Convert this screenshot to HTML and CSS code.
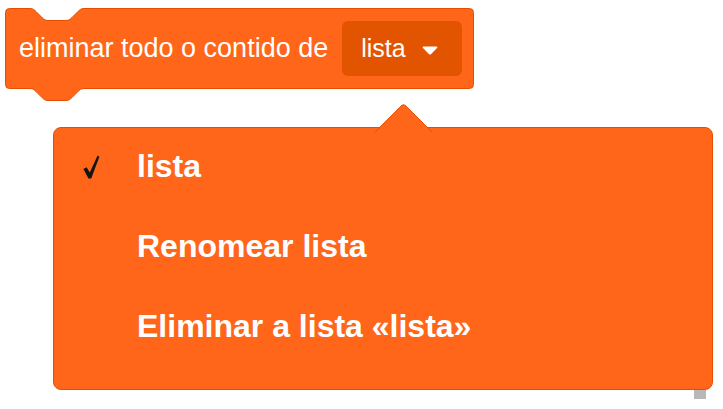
FILE: index.html
```html
<!DOCTYPE html>
<html lang="gl">
<head>
    <meta charset="UTF-8">
    <meta name="viewport" content="width=device-width, initial-scale=1.0">
    <title>eliminar todo o contido de lista</title>
    <link rel="stylesheet" href="styles.css">
</head>
<body>
    <!-- Block -->
    <div class="block">
        <svg class="block-shape" width="470" height="95" viewBox="0 0 470 95">
            <path d="M0.5 4.5 Q0.5 0.5 4.5 0.5 H25 c3,0 4.5,1.5 6,3 l6,6 c1.5,1.5 3,3 6,3 h18 c3,0 4.5,-1.5 6,-3 l6,-6 c1.5,-1.5 3,-3 6,-3 H464.5 Q468.5 0.5 468.5 4.5 V76.5 Q468.5 80.5 464.5 80.5 H79 c-3,0 -4.5,1.5 -6,3 l-6,6 c-1.5,1.5 -3,3 -6,3 h-18 c-3,0 -4.5,-1.5 -6,-3 l-6,-6 c-1.5,-1.5 -3,-3 -6,-3 H4.5 Q0.5 80.5 0.5 76.5 Z" fill="#ff661a" stroke="#e64d00" stroke-width="1"/>
        </svg>
        <div class="block-row">
            <span class="block-label">eliminar todo o contido de</span>
            <div class="field">
                <span>lista</span>
                <svg class="caret" width="16" height="9" viewBox="0 0 16 9">
                    <path d="M1.6 0.5 H14.4 Q16 0.5 15 1.9 L9.2 8 Q8 9.1 6.8 8 L1 1.9 Q0 0.5 1.6 0.5 Z" fill="#fff"/>
                </svg>
            </div>
        </div>
    </div>

    <!-- Dropdown menu -->
    <div class="menu-wrap">
        <div class="menu-arrow"></div>
        <div class="menu">
            <div class="menu-item">
                <svg class="check" width="17" height="24" viewBox="0 0 17 24">
                    <path d="M0.4 14 L3.6 12.2 L6.8 17.6 L14.6 0.6 L16.4 1.8 L8.2 23.4 L5.4 23.4 Z" fill="#151515"/>
                </svg>
                <span>lista</span>
            </div>
            <div class="menu-item">
                <span class="check"></span>
                <span>Renomear lista</span>
            </div>
            <div class="menu-item">
                <span class="check"></span>
                <span>Eliminar a lista «lista»</span>
            </div>
        </div>
    </div>
    <div class="corner"></div>
</body>
</html>
```

FILE: styles.css
```css
body {
    margin: 0;
    background: #fff;
    font-family: "Liberation Sans", Arial, sans-serif;
    width: 723px;
    height: 409px;
    overflow: hidden;
}
.block {
    display: grid;
    width: 470px;
    height: 95px;
    margin: 8px 0 0 5px;
}
.block-shape,
.block-row {
    grid-area: 1 / 1;
}
.block-row {
    display: flex;
    align-items: center;
    height: 81px;
    padding-left: 14px;
    color: #fff;
    font-size: 27px;
}
.field {
    display: flex;
    align-items: center;
    width: 120px;
    height: 55px;
    box-sizing: border-box;
    margin-left: 14px;
    padding-left: 19px;
    background: #e35400;
    border-radius: 6px;
    font-size: 25px;
}
.caret {
    margin-left: 16px;
    margin-top: 3px;
}
.menu-wrap {
    width: 660px;
    margin-left: 53px;
}
.menu-arrow {
    height: 24px;
}
.menu-arrow::before {
    content: '';
    display: block;
    width: 40px;
    height: 40px;
    margin-left: 330px;
    background: #ff661a;
    border-top: 1px solid #e64d00;
    border-left: 1px solid #e64d00;
    border-top-left-radius: 5px;
    transform: translateY(8px) rotate(45deg);
}
.menu {
    background: #ff661a;
    border: 1px solid #e64d00;
    border-radius: 8px;
    height: 261px;
    color: #fff;
    font-size: 32px;
    font-weight: bold;
}
.menu-item {
    display: flex;
    align-items: center;
    height: 77px;
    padding: 0 0 3px 29px;
}
.check {
    flex: none;
    width: 17px;
    margin-right: 37px;
}
.corner {
    width: 12px;
    height: 9px;
    margin-left: 694px;
    background: #b8b8b8;
}
```
